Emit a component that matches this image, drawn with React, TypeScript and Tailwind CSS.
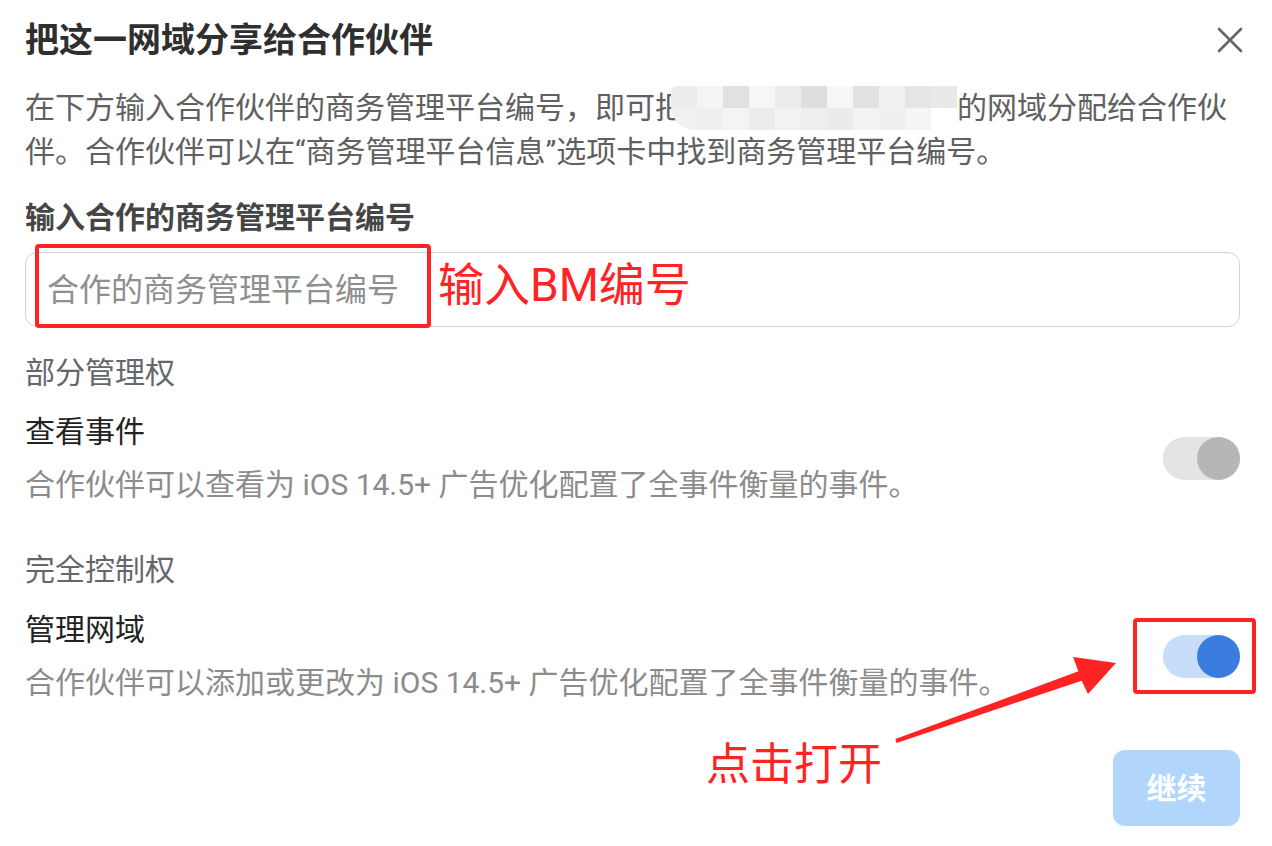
import React from 'react';

const mosaicTop = ['#ededed', '#f4f4f4', '#e1e1e1', '#f6f6f6', '#ececec', '#dedede', '#f7f7f7', '#e2e2e2', '#f1f1f1', '#e5e5e5', '#e9e9e9'];
const mosaicBottom = ['#f1f1f1', '#efefef', '#f4f4f4', '#ececec', '#f2f2f2', '#eeeeee', '#ebebeb', '#f3f3f3', '#efefef', '#f5f5f5', '#ffffff'];

const Toggle: React.FC<{ on?: boolean }> = ({ on }) => (
  <div className={`flex h-[43px] w-[77px] shrink-0 justify-end rounded-full ${on ? 'bg-[#c8ddf9]' : 'bg-[#e4e4e4]'}`}>
    <div className={`h-[43px] w-[43px] rounded-full ${on ? 'bg-[#3b7ddf]' : 'bg-[#b6b6b6]'}`} />
  </div>
);

const App: React.FC = () => {
  return (
    <div className="relative h-[846px] w-[1272px] overflow-hidden bg-white pl-[25px] pr-[32px] font-['Roboto','Noto_Sans_CJK_SC',sans-serif]">
      {/* Header */}
      <div className="flex h-[80px] items-center justify-between">
        <h1 className="text-[34px] font-bold leading-[44px] text-[#2f2f2f]">把这一网域分享给合作伙伴</h1>
        <svg className="-mr-[4px] h-[28px] w-[28px]" viewBox="0 0 28 28" fill="none" stroke="#666" strokeWidth={2.6} strokeLinecap="round">
          <path d="M3 3L25 25M25 3L3 25" />
        </svg>
      </div>

      {/* Description */}
      <p className="mt-[6px] text-[30px] leading-[44px] text-[#606060]">
        在下方输入合作伙伴的商务管理平台编号，即可把
        <span className="-ml-[14px] inline-grid h-[44px] w-[286px] grid-cols-11 grid-rows-2 overflow-hidden rounded-bl-[24px] rounded-br-[20px] rounded-tl-[6px] align-top">
          {mosaicTop.map((c, i) => <span key={'t' + i} style={{ background: c }} />)}
          {mosaicBottom.map((c, i) => <span key={'b' + i} style={{ background: c }} />)}
        </span>
        的网域分配给合作伙
        <br />
        伴。合作伙伴可以在“商务管理平台信息”选项卡中找到商务管理平台编号。
      </p>

      {/* Input */}
      <div className="mt-[22px] text-[30px] font-bold leading-[44px] text-[#454545]">输入合作的商务管理平台编号</div>
      <div className="mt-[12px] flex h-[75px] items-center rounded-[12px] border-[1.5px] border-[#d0d3d8] pl-[21px] text-[32px] text-[#8f8f8f]">
        合作的商务管理平台编号
      </div>

      {/* Partial access */}
      <div className="mt-[24px] text-[30px] leading-[44px] text-[#65676b]">部分管理权</div>
      <div className="mt-[15px] flex items-center justify-between">
        <div>
          <div className="text-[30px] leading-[44px] text-[#222]">查看事件</div>
          <div className="mt-[9px] text-[30px] leading-[44px] text-[#8c8c8c]">合作伙伴可以查看为 iOS 14.5+ 广告优化配置了全事件衡量的事件。</div>
        </div>
        <Toggle />
      </div>

      {/* Full control */}
      <div className="mt-[41px] text-[30px] leading-[44px] text-[#65676b]">完全控制权</div>
      <div className="mt-[16px] flex items-center justify-between">
        <div>
          <div className="text-[30px] leading-[44px] text-[#222]">管理网域</div>
          <div className="mt-[9px] text-[30px] leading-[44px] text-[#8c8c8c]">合作伙伴可以添加或更改为 iOS 14.5+ 广告优化配置了全事件衡量的事件。</div>
        </div>
        <Toggle on />
      </div>

      {/* Footer */}
      <div className="mt-[45px] flex justify-end">
        <button className="h-[76px] w-[127px] rounded-[12px] bg-[#b2d5fc] text-[30px] font-bold text-white">继续</button>
      </div>

      {/* Annotations */}
      <div className="absolute left-[35px] top-[244px] h-[84px] w-[396px] rounded-[4px] border-[4px] border-[#ff2323]" />
      <div className="absolute left-[438px] top-[256px] text-[46px] leading-[58px] text-[#ff2323]">输入BM编号</div>
      <div className="absolute left-[1133px] top-[618px] h-[76px] w-[123px] rounded-[4px] border-[4px] border-[#ff2323]" />
      <div className="absolute left-[706px] top-[736px] text-[44px] leading-[58px] text-[#ff2323]">点击打开</div>
      <svg className="pointer-events-none absolute left-0 top-0 h-[846px] w-[1272px]" viewBox="0 0 1272 846">
        <polygon
          fill="#ff2323"
          points="895.4,739.1 1078.4,671.3 1073,657 1116,663 1088,694 1081.6,680.7 896.6,742.9"
        />
      </svg>
    </div>
  );
};

export default App;
